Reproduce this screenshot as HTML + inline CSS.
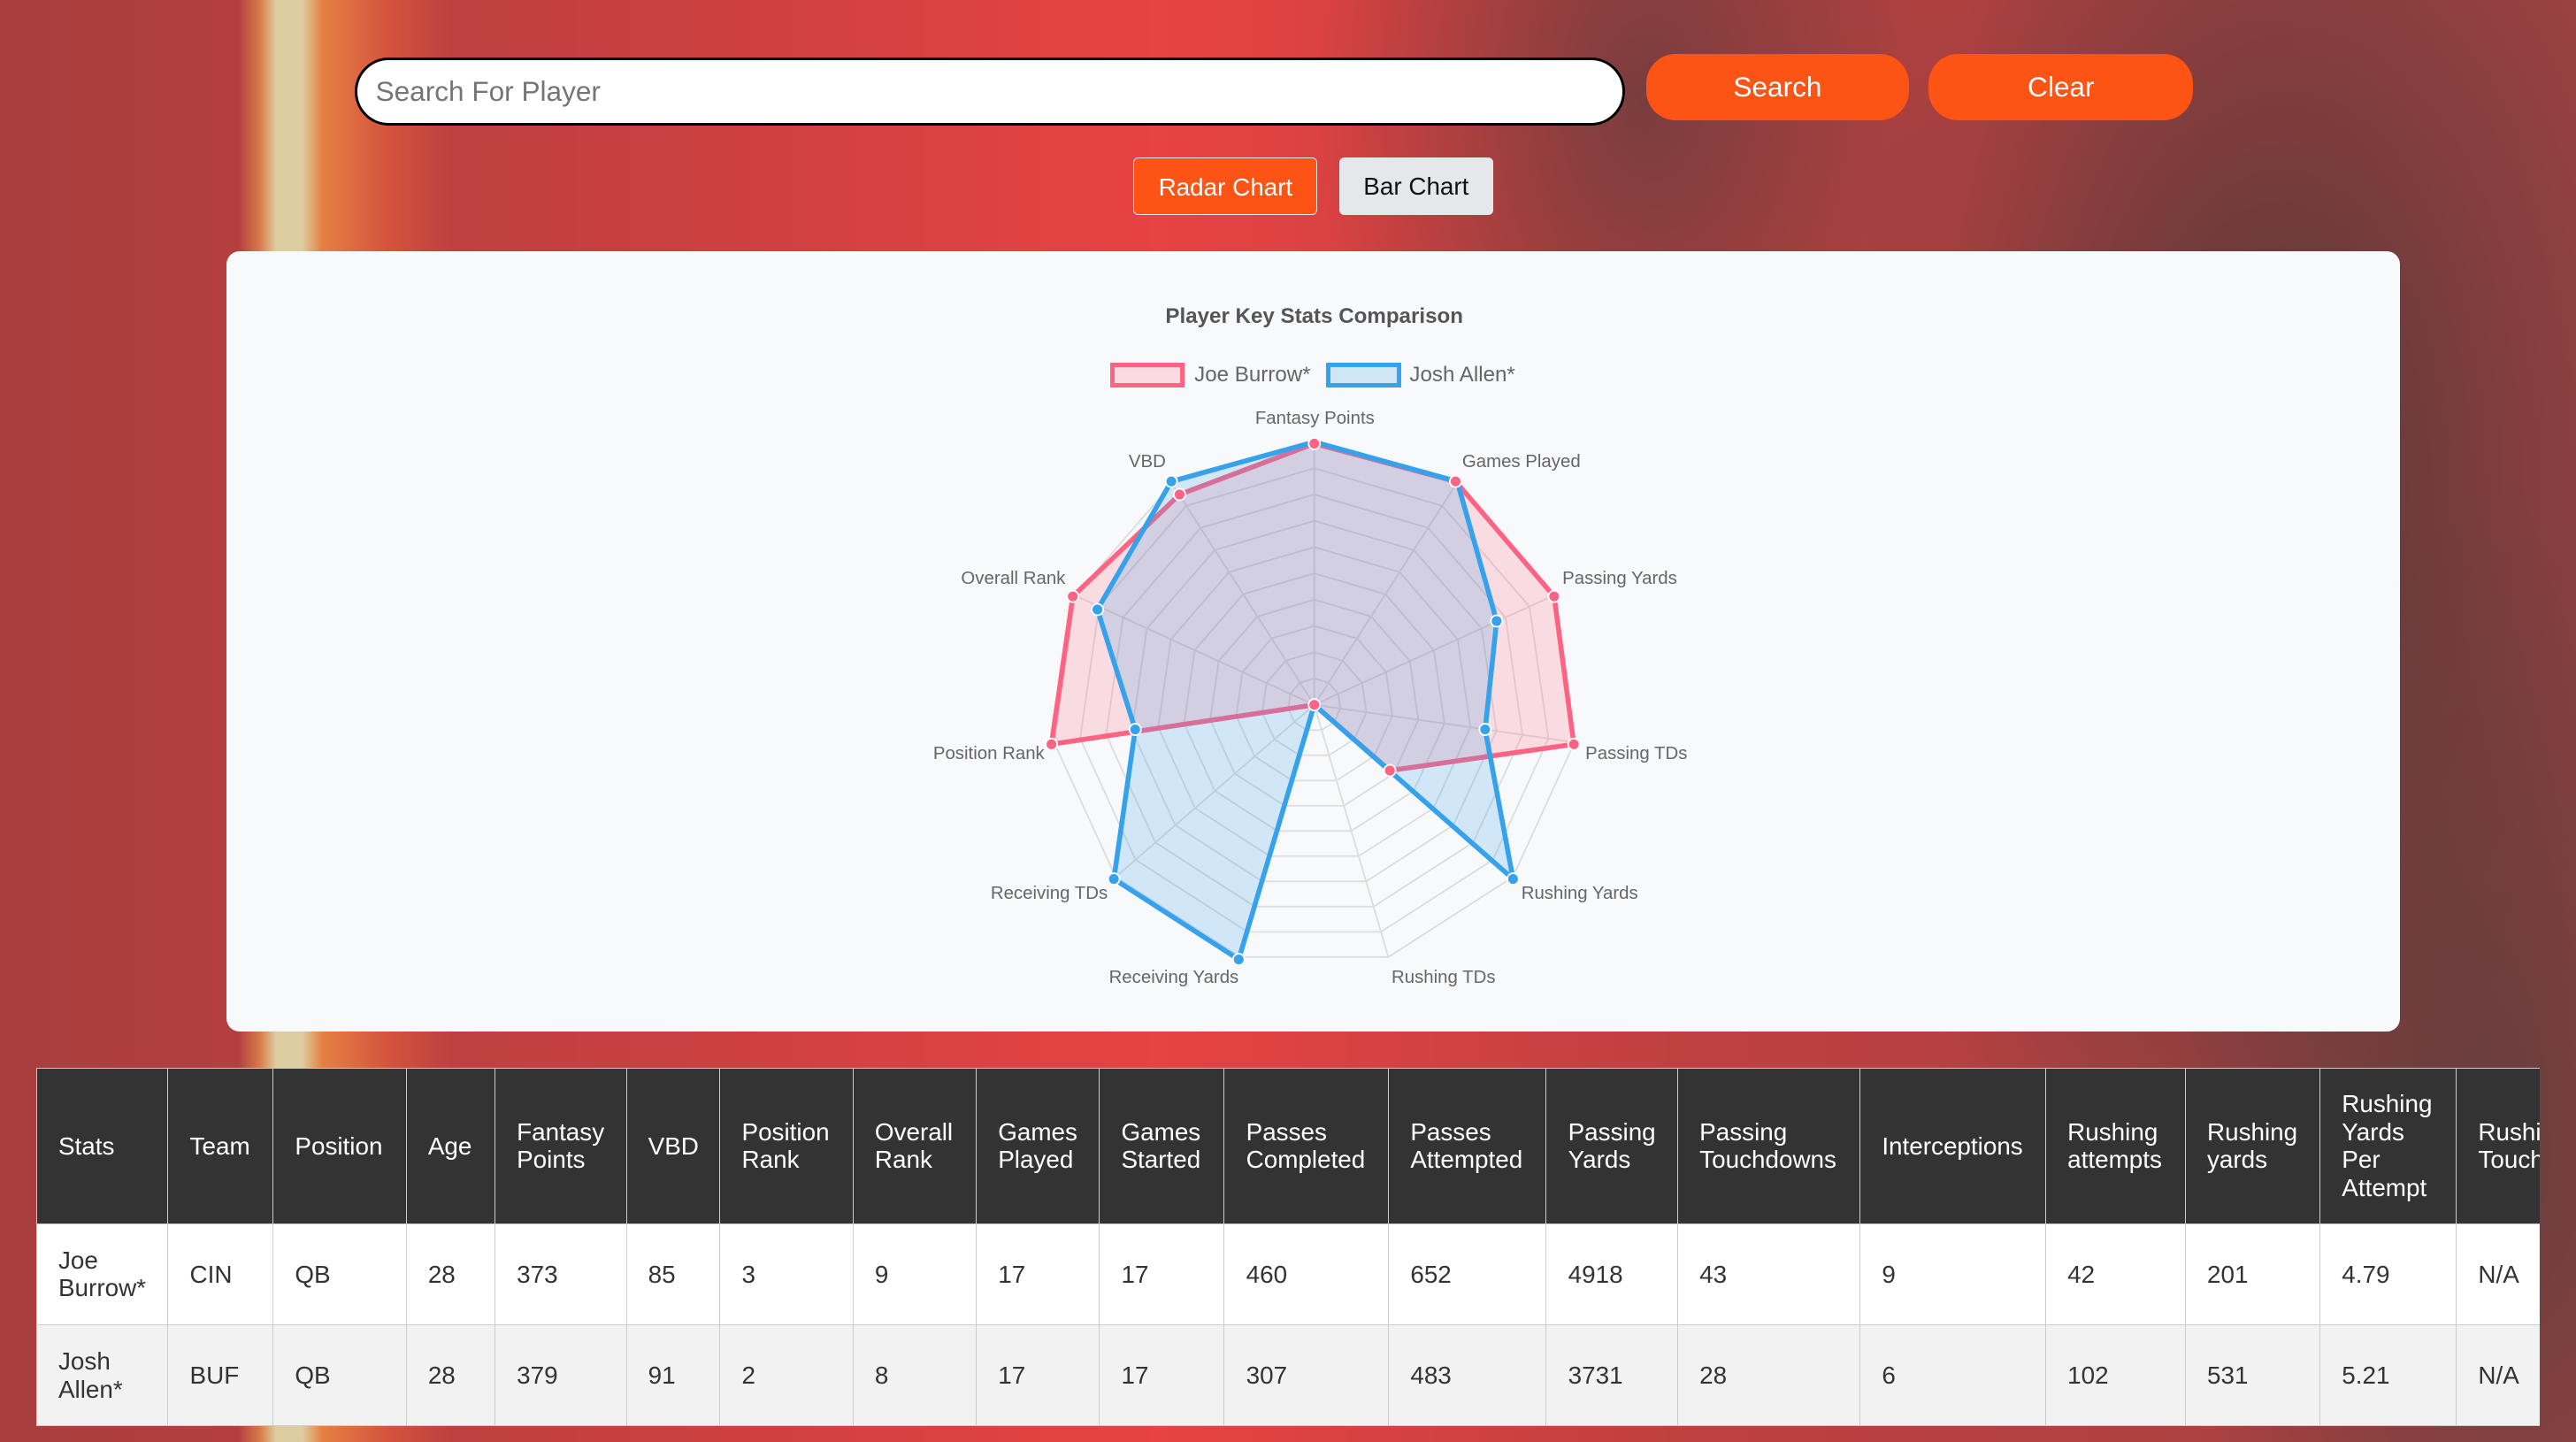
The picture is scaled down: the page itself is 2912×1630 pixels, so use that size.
<!DOCTYPE html>
<html><head><meta charset="utf-8"><style>
html,body{margin:0;padding:0;width:2912px;height:1630px;overflow:hidden;font-family:"Liberation Sans",Arial,sans-serif}
#w{zoom:1.85714;width:1568px;height:878px;position:relative;overflow:hidden;
background:
linear-gradient(90deg,rgba(0,0,0,0) 145px,rgba(240,160,80,.6) 158px,rgba(225,220,170,.9) 168px,rgba(225,220,170,.9) 184px,rgba(245,150,70,.75) 196px,rgba(245,110,60,.45) 235px,rgba(0,0,0,0) 275px),
radial-gradient(ellipse 260px 500px at 1380px 300px,rgba(70,55,55,.85),rgba(0,0,0,0) 100%),
radial-gradient(ellipse 200px 400px at 1520px 700px,rgba(80,60,60,.7),rgba(0,0,0,0) 100%),
radial-gradient(ellipse 200px 300px at 1000px 60px,rgba(90,60,60,.7),rgba(0,0,0,0) 100%),
linear-gradient(90deg,#a83e3e 0%,#c84040 25%,#e84242 45%,#c04040 65%,#a04242 100%)}
.abs{position:absolute}
#search{left:216px;top:35px;width:770px;height:38px;border:2px solid #000;border-radius:21px;background:#fff;color:#757575;font-size:17px;line-height:38px;box-sizing:content-box}
#search span{padding-left:11px}
.ob{background:#fd5315;color:#fff;font-size:17px;text-align:center;border-radius:18px}
.card{left:138px;top:153px;width:1323px;height:475px;background:#f8f9fa;border-radius:8px}
#tw{position:absolute;left:22px;top:650px;width:1524px;overflow:hidden}
table{border-collapse:collapse;font-size:15px;color:#333;table-layout:fixed;width:1589px}
td,th{border:1px solid #ccc;text-align:left;padding:0 0 0 13px;font-weight:normal;vertical-align:middle;line-height:17px;overflow:hidden;white-space:normal}
th{background:#333;color:#fff;height:94px}
tr.a td{background:#fff;height:61px}
tr.b td{background:#f2f2f2;height:61px}
.lbl{position:absolute;font-size:11px;color:#666;white-space:nowrap}
</style></head><body><div id="w">
<div id="search" class="abs"><span>Search For Player</span></div>
<div class="abs ob" style="left:1002px;top:33px;width:160px;height:40px;line-height:40px">Search</div>
<div class="abs ob" style="left:1174px;top:33px;width:161px;height:40px;line-height:40px">Clear</div>
<div class="abs" style="left:690px;top:96px;width:112px;height:35px;line-height:35px;background:#fd5315;color:#fff;font-size:15px;text-align:center;border:1px solid #e5e7ea;border-radius:3px;box-sizing:border-box">Radar Chart</div>
<div class="abs" style="left:815px;top:96px;width:94px;height:35px;line-height:35px;background:#e5e7ea;color:#111;font-size:15px;text-align:center;border-radius:3px">Bar Chart</div>
<div class="abs card"></div>
<div class="abs" style="left:600px;top:185px;width:400px;text-align:center;font-size:13px;font-weight:bold;color:#555">Player Key Stats Comparison</div>
<div class="abs" style="left:676px;top:221px;width:45px;height:15px;border:3px solid #ff6384;background:#fadbe1;box-sizing:border-box"></div>
<div class="lbl" style="left:727px;top:221px;font-size:13px">Joe Burrow*</div>
<div class="abs" style="left:807px;top:221px;width:46px;height:15px;border:3px solid #36a2eb;background:#d0e6f5;box-sizing:border-box"></div>
<div class="lbl" style="left:858px;top:221px;font-size:13px">Josh Allen*</div>
<svg class="abs" style="left:0;top:0" width="1568" height="878" id="rad">
<g id="grid" stroke="#ddd" fill="none" stroke-width="1"></g>
<polygon points="800,270 886,293 946,363 958,453 846,469 800,429 800,429 800,429 640,453 653,363 718,301" fill="rgba(255,99,132,0.2)" stroke="#ff6384" stroke-width="3" stroke-linejoin="round"/>
<polygon points="800,269 887,293 911,378 904,444 921,535 800,429 754,584 678,535 691,444 668,371 713,293" fill="rgba(54,162,235,0.2)" stroke="#36a2eb" stroke-width="3" stroke-linejoin="round"/>
<g fill="#ff6384" stroke="#fff" stroke-width="1">
<circle cx="800" cy="270" r="3.5"/><circle cx="886" cy="293" r="3.5"/><circle cx="946" cy="363" r="3.5"/><circle cx="958" cy="453" r="3.5"/><circle cx="846" cy="469" r="3.5"/><circle cx="800" cy="429" r="3.5"/><circle cx="640" cy="453" r="3.5"/><circle cx="653" cy="363" r="3.5"/><circle cx="718" cy="301" r="3.5"/></g>
<g fill="#36a2eb" stroke="#fff" stroke-width="1">
<circle cx="713" cy="293" r="3.5"/><circle cx="911" cy="378" r="3.5"/><circle cx="904" cy="444" r="3.5"/><circle cx="921" cy="535" r="3.5"/><circle cx="754" cy="584" r="3.5"/><circle cx="678" cy="535" r="3.5"/><circle cx="691" cy="444" r="3.5"/><circle cx="668" cy="371" r="3.5"/></g>
</svg>
<div class="lbl" style="left:764px;top:249px">Fantasy Points</div>
<div class="lbl" style="left:890px;top:275px">Games Played</div>
<div class="lbl" style="left:951px;top:346px">Passing Yards</div>
<div class="lbl" style="left:965px;top:453px">Passing TDs</div>
<div class="lbl" style="left:926px;top:538px">Rushing Yards</div>
<div class="lbl" style="left:847px;top:589px">Rushing TDs</div>
<div class="lbl" style="left:675px;top:589px">Receiving Yards</div>
<div class="lbl" style="left:603px;top:538px">Receiving TDs</div>
<div class="lbl" style="left:568px;top:453px">Position Rank</div>
<div class="lbl" style="left:585px;top:346px">Overall Rank</div>
<div class="lbl" style="left:687px;top:275px">VBD</div>
<div id="tw"><table>
<colgroup><col style="width:80px"><col style="width:64px"><col style="width:81px"><col style="width:54px"><col style="width:80px"><col style="width:57px"><col style="width:81px"><col style="width:75px"><col style="width:75px"><col style="width:76px"><col style="width:100px"><col style="width:96px"><col style="width:80px"><col style="width:111px"><col style="width:113px"><col style="width:85px"><col style="width:82px"><col style="width:83px"><col style="width:116px"></colgroup>
<tr><th>Stats</th><th>Team</th><th>Position</th><th>Age</th><th>Fantasy<br>Points</th><th>VBD</th><th>Position<br>Rank</th><th>Overall<br>Rank</th><th>Games<br>Played</th><th>Games<br>Started</th><th>Passes<br>Completed</th><th>Passes<br>Attempted</th><th>Passing<br>Yards</th><th>Passing<br>Touchdowns</th><th>Interceptions</th><th>Rushing<br>attempts</th><th>Rushing<br>yards</th><th>Rushing<br>Yards<br>Per<br>Attempt</th><th>Rushing<br>Touchdowns</th></tr>
<tr class="a"><td>Joe<br>Burrow*</td><td>CIN</td><td>QB</td><td>28</td><td>373</td><td>85</td><td>3</td><td>9</td><td>17</td><td>17</td><td>460</td><td>652</td><td>4918</td><td>43</td><td>9</td><td>42</td><td>201</td><td>4.79</td><td>N/A</td></tr>
<tr class="b"><td>Josh<br>Allen*</td><td>BUF</td><td>QB</td><td>28</td><td>379</td><td>91</td><td>2</td><td>8</td><td>17</td><td>17</td><td>307</td><td>483</td><td>3731</td><td>28</td><td>6</td><td>102</td><td>531</td><td>5.21</td><td>N/A</td></tr>
</table></div>
</div>
<script>
var g=document.getElementById('grid'),cx=800,cy=429,R=160,s='';
for(var k=1;k<=10;k++){var r=R*k/10,p=[];for(var i=0;i<11;i++){var a=(-90+i*360/11)*Math.PI/180;p.push((cx+r*Math.cos(a)).toFixed(1)+','+(cy+r*Math.sin(a)).toFixed(1));}s+='<polygon points="'+p.join(' ')+'"/>';}
for(var i=0;i<11;i++){var a=(-90+i*360/11)*Math.PI/180;s+='<line x1="800" y1="429" x2="'+(cx+R*Math.cos(a))+'" y2="'+(cy+R*Math.sin(a))+'"/>';}
g.innerHTML=s;
</script>
</body></html>
